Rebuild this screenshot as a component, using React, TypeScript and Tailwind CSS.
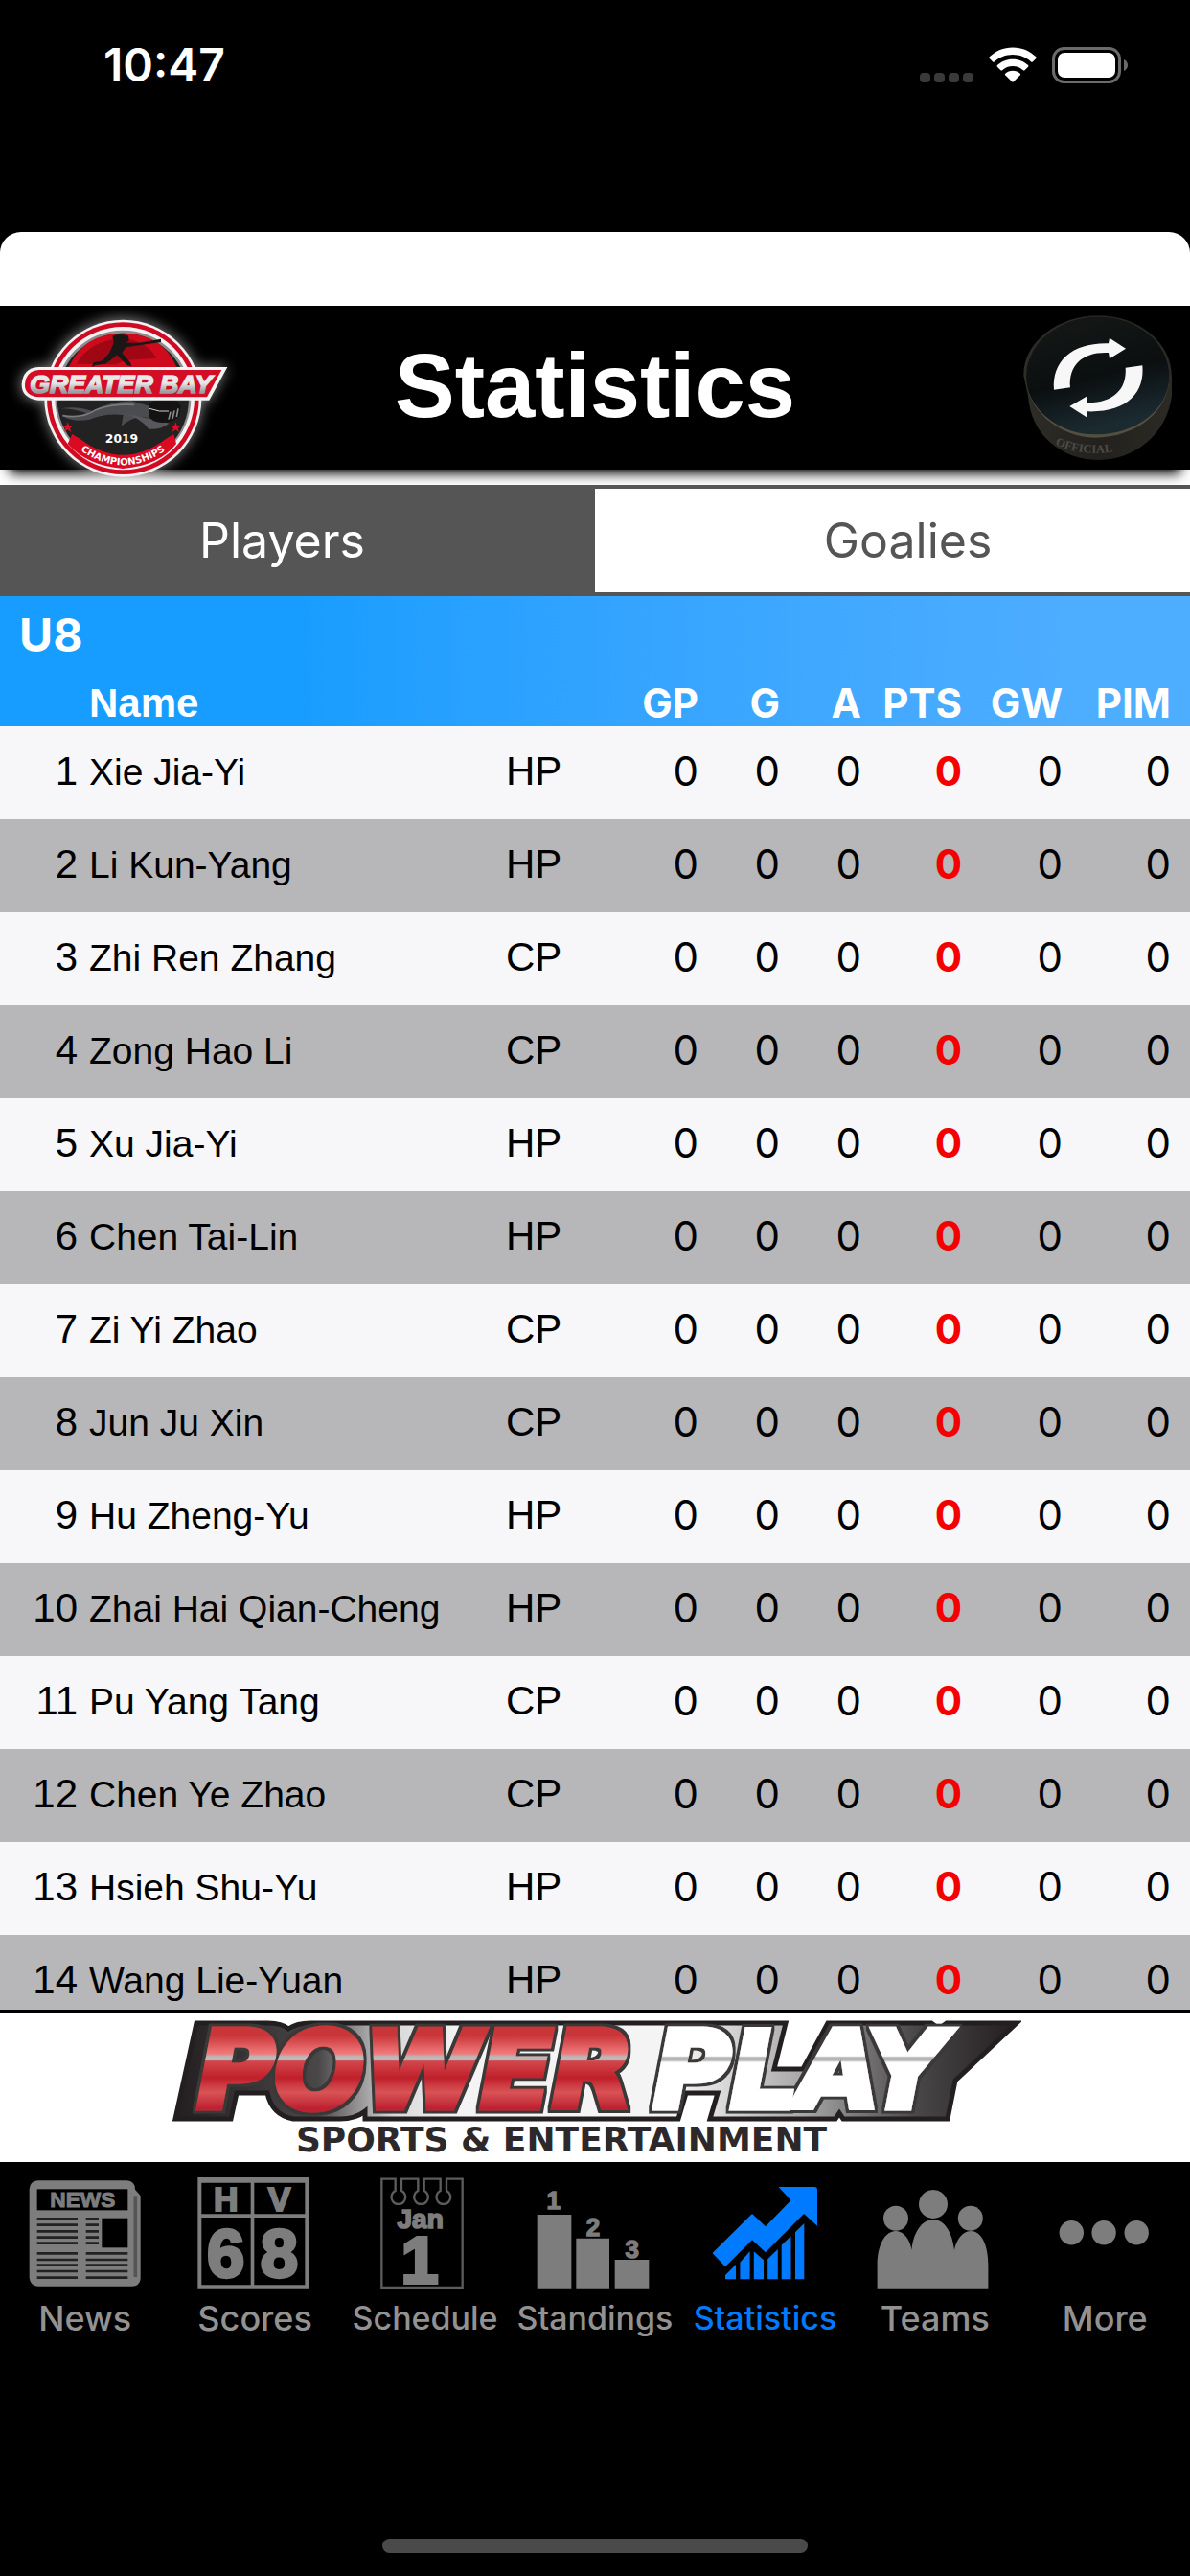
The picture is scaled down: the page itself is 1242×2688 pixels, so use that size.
import React, { useState } from 'react';
import clsx from 'clsx';

type Player = { name: string; team: string };

const players: Player[] = [
  { name: 'Xie Jia-Yi', team: 'HP' },
  { name: 'Li Kun-Yang', team: 'HP' },
  { name: 'Zhi Ren Zhang', team: 'CP' },
  { name: 'Zong Hao Li', team: 'CP' },
  { name: 'Xu Jia-Yi', team: 'HP' },
  { name: 'Chen Tai-Lin', team: 'HP' },
  { name: 'Zi Yi Zhao', team: 'CP' },
  { name: 'Jun Ju Xin', team: 'CP' },
  { name: 'Hu Zheng-Yu', team: 'HP' },
  { name: 'Zhai Hai Qian-Cheng', team: 'HP' },
  { name: 'Pu Yang Tang', team: 'CP' },
  { name: 'Chen Ye Zhao', team: 'CP' },
  { name: 'Hsieh Shu-Yu', team: 'HP' },
  { name: 'Wang Lie-Yuan', team: 'HP' },
];

const statColumns = ['GP', 'G', 'A', 'PTS', 'GW', 'PIM'];

function StatusBar() {
  return (
    <div className="flex h-[136px] shrink-0 items-center justify-between pl-[108px] pr-16 text-white">
      <span className="text-5xl font-semibold leading-none">10:47</span>
      <div className="flex items-center gap-4">
        <svg viewBox="0 0 56 38" className="h-[38px] w-14" fill="#3a3a3a">
          <rect x="0" y="27" width="11" height="10" rx="4" />
          <rect x="15" y="27" width="11" height="10" rx="4" />
          <rect x="30" y="27" width="11" height="10" rx="4" />
          <rect x="45" y="27" width="11" height="10" rx="4" />
        </svg>
        <svg viewBox="0 0 50 38" className="h-[38px] w-[50px]" fill="white">
          <path d="M25 0.5C34.5 0.5 43 4.2 49.3 10.3C49.8 10.8 49.8 11.4 49.3 11.9L45.8 15.4C45.3 15.9 44.7 15.9 44.2 15.4C39.1 10.6 32.4 7.9 25 7.9C17.6 7.9 10.9 10.6 5.8 15.4C5.3 15.9 4.7 15.9 4.2 15.4L0.7 11.9C0.2 11.4 0.2 10.8 0.7 10.3C7 4.2 15.5 0.5 25 0.5Z" />
          <path d="M25 12.8C31.2 12.8 36.9 15.2 41.1 19.1C41.6 19.6 41.6 20.2 41.1 20.7L37.5 24.2C37 24.7 36.4 24.7 35.9 24.2C33 21.6 29.2 20 25 20C20.8 20 17 21.6 14.1 24.2C13.6 24.7 13 24.7 12.5 24.2L8.9 20.7C8.4 20.2 8.4 19.6 8.9 19.1C13.1 15.2 18.8 12.8 25 12.8Z" />
          <path d="M25 24.8C28 24.8 30.7 25.9 32.8 27.7C33.3 28.2 33.3 28.8 32.8 29.3L25.8 36.3C25.3 36.8 24.7 36.8 24.2 36.3L17.2 29.3C16.7 28.8 16.7 28.2 17.2 27.7C19.3 25.9 22 24.8 25 24.8Z" />
        </svg>
        <svg viewBox="0 0 80 38" className="h-[38px] w-20">
          <rect x="1.5" y="1.5" width="69" height="35" rx="11" fill="none" stroke="#6b6b6b" strokeWidth="3" />
          <rect x="6" y="6" width="60" height="26" rx="7" fill="white" />
          <path d="M75 13C78 14.5 79 17 79 19C79 21 78 23.5 75 25Z" fill="#6b6b6b" />
        </svg>
      </div>
    </div>
  );
}

function Emblem() {
  return (
    <svg viewBox="0 30 720 540" className="h-[180px] w-60 shrink-0 overflow-visible" role="img" aria-label="Greater Bay Championships 2019">
      <defs>
        <filter id="glow" x="-30%" y="-30%" width="160%" height="160%">
          <feGaussianBlur stdDeviation="20" />
        </filter>
        <linearGradient id="lettering" x1="0" y1="0" x2="0" y2="1">
          <stop offset="0.45" stopColor="#e8e8e8" />
          <stop offset="0.75" stopColor="#9c9ea1" />
        </linearGradient>
        <path id="ribbon" d="M232 468Q385 590 538 468" />
      </defs>
      <g filter="url(#glow)" fill="#fff" opacity="0.5">
        <circle cx="385" cy="318" r="248" />
        <path d="M120 222H712L655 328H120Q62 320 66 275Q70 225 120 222Z" />
      </g>
      <circle cx="385" cy="320" r="246" fill="#f2f2f2" />
      <circle cx="385" cy="320" r="238" fill="#cf0a22" />
      <circle cx="385" cy="320" r="224" fill="#f2f2f2" />
      <circle cx="385" cy="320" r="213" fill="#8d8d8d" />
      <circle cx="385" cy="322" r="206" fill="#222" />
      <path d="M216 222Q262 116 385 116Q508 116 553 222Z" fill="#cf0a1c" />
      <path d="M240 212Q280 138 385 132Q460 140 490 194L400 200L360 214Z" fill="#a10615" />
      <path
        d="M352 124Q376 116 402 124L404 138L396 146L436 146L504 134V144L436 154L394 160L382 178L408 208L412 220L398 216L366 184L352 196L330 212L300 216L288 222L292 208L322 202L342 178L356 148Z"
        fill="#1b1717"
      />
      <path d="M190 352Q240 342 290 360Q340 330 410 328L468 344V382Q420 370 380 408L386 372Q330 366 280 386Q230 396 196 376Q250 380 270 366Q230 352 190 352Z" fill="#4a4c4f" />
      <path d="M384 366Q440 378 474 384L530 398Q500 420 466 416Q440 380 384 366Z" fill="#56585b" />
      <path d="M196 374Q260 384 300 356Q350 336 420 340" fill="none" stroke="#7a7c7f" strokeWidth="5" />
      <path d="M466 346Q470 322 520 322Q560 322 566 344L562 376Q540 398 506 396Q472 394 468 376Z" fill="#141212" />
      <path d="M468 352Q500 364 528 360" fill="none" stroke="#d0d0d0" strokeWidth="3" />
      <path d="M534 362L528 386M546 358L540 384M558 352L553 378" stroke="#8b8b8b" strokeWidth="5" />
      <path d="M212 394L216 405L229 406L219 413L223 426L212 418L201 426L205 413L195 406L208 405Z" fill="#e00d25" />
      <path d="M550 394L554 405L567 406L557 413L561 426L550 418L539 426L543 413L533 406L546 405Z" fill="#e00d25" />
      <path d="M226 432L250 446Q385 548 520 446L544 432L552 462Q500 530 385 540Q270 530 212 462Z" fill="#d90a22" />
      <path d="M120 222H712L655 326H120Q66 318 68 275Q72 226 120 222Z" fill="#f4f4f4" />
      <path d="M122 231H694L648 316H122Q76 312 78 275Q82 234 122 231Z" fill="#d40d26" />
      <g fontFamily="Liberation Sans, sans-serif" fontSize="80" fontWeight="700" fontStyle="italic" textAnchor="middle">
        <text x="379" y="304" fill="url(#lettering)" stroke="url(#lettering)" strokeWidth="5">
          GREATER BAY
        </text>
      </g>
      <text x="381" y="458" textAnchor="middle" fill="#fff" fontFamily="DejaVu Sans, sans-serif" fontSize="37" fontWeight="700">
        2019
      </text>
      <text fill="#fff" fontFamily="DejaVu Sans, sans-serif" fontSize="30" fontWeight="700">
        <textPath href="#ribbon" startOffset="50%" textAnchor="middle">
          CHAMPIONSHIPS
        </textPath>
      </text>
    </svg>
  );
}

function PuckIcon() {
  return (
    <svg viewBox="75 45 480 480" className="size-40">
      <defs>
        <linearGradient id="puckTop" x1="0" y1="0" x2="0.3" y2="1">
          <stop offset="0" stopColor="#161917" />
          <stop offset="0.6" stopColor="#0b0f10" />
          <stop offset="1" stopColor="#1b2a30" />
        </linearGradient>
        <linearGradient id="puckSide" x1="0" y1="0" x2="1" y2="0">
          <stop offset="0" stopColor="#2e2d28" />
          <stop offset="0.5" stopColor="#22211d" />
          <stop offset="1" stopColor="#2b2a25" />
        </linearGradient>
        <path id="puckEdge" d="M150 446Q260 510 395 478" />
      </defs>
      <path d="M82 245C82 140 190 58 316 58C440 58 546 140 546 250V310C530 430 430 510 316 510C200 510 104 430 96 310Z" fill="url(#puckSide)" />
      <path d="M90 250C90 142 196 61 316 61C436 61 538 142 538 250C538 360 430 440 306 440C190 440 90 350 90 250Z" fill="#54503f" />
      <path d="M90 248C90 142 196 61 316 61C436 61 538 142 538 248C538 355 430 430 306 430C190 430 90 348 90 248Z" fill="url(#puckTop)" />
      <text fill="#4d4b45" fontFamily="Liberation Serif, serif" fontSize="38" fontWeight="700">
        <textPath href="#puckEdge" startOffset="50%" textAnchor="middle">
          OFFICIAL
        </textPath>
      </text>
      <path d="M177 290C170 200 235 142 348 145L351 128L402 161L351 193L348 174C270 170 222 210 228 283Z" fill="#f7f7f7" />
      <path d="M454 214C462 300 405 362 281 358L279 376L226 342L279 311L281 330C360 332 406 290 401 221Z" fill="#f7f7f7" />
    </svg>
  );
}

function Header() {
  return (
    <header className="mb-4 flex h-[171px] shrink-0 items-start justify-between bg-black text-white shadow-[0_14px_12px_-10px_#000]">
      <Emblem />
      <h1 className="self-center pb-1 font-['Liberation_Sans',sans-serif] text-[94px] font-bold leading-none">Statistics</h1>
      <div className="flex w-60 justify-end self-center pr-4">
        <button type="button" aria-label="Refresh">
          <PuckIcon />
        </button>
      </div>
    </header>
  );
}

function Tabs() {
  const [active, setActive] = useState('Players');
  return (
    <div className="grid h-[116px] shrink-0 grid-cols-2 border-y-4 border-[#555] bg-[#555] text-[50px]" role="tablist">
      {['Players', 'Goalies'].map((tab) => (
        <button
          key={tab}
          type="button"
          role="tab"
          aria-selected={active === tab}
          onClick={() => setActive(tab)}
          className={clsx(
            active === tab ? 'bg-[#555] text-white' : 'bg-white text-[#555]',
            tab === 'Players' ? 'pr-8' : 'pl-8',
          )}
        >
          {tab}
        </button>
      ))}
    </div>
  );
}

function StatsTable() {
  return (
    <div className="min-h-0 flex-1 overflow-hidden">
      <table className="w-full table-fixed border-collapse text-[42px] leading-none text-black">
        <colgroup>
          <col className="w-[81px]" />
          <col />
          <col className="w-[99px]" />
          <col className="w-[102px]" />
          <col className="w-[85px]" />
          <col className="w-[85px]" />
          <col className="w-[105px]" />
          <col className="w-[105px]" />
          <col className="w-[133px]" />
        </colgroup>
        <thead className="bg-linear-to-r from-[#179dff] from-25% to-[#4dadff] to-90% text-white">
          <tr className="h-20">
            <th colSpan={9} scope="colgroup" className="pl-5 pt-0.5 text-left text-5xl font-bold">
              U8
            </th>
          </tr>
          <tr className="h-14">
            <td />
            <th scope="col" className="pl-3 pt-2 text-left font-['Liberation_Sans',sans-serif] font-bold">Name</th>
            <td />
            {statColumns.map((label) => (
              <th key={label} scope="col" className="pt-2 text-right font-bold last:pr-5">
                {label}
              </th>
            ))}
          </tr>
        </thead>
        <tbody>
          {players.map((player, i) => (
            <tr key={player.name} className="h-[97px] odd:bg-[#f7f7f9] even:bg-[#b7b7b9]">
              <td className="pb-1 text-right font-['Liberation_Sans',sans-serif]">{i + 1}</td>
              <td className="whitespace-nowrap pb-0.5 pl-3 font-['Liberation_Sans',sans-serif] text-[39px]">{player.name}</td>
              <td className="pb-1 font-['Liberation_Sans',sans-serif]">{player.team}</td>
              {statColumns.map((label) => (
                <td
                  key={label}
                  className={clsx('pb-1 text-right last:pr-5', label === 'PTS' && 'font-bold text-[#f50000]')}
                >
                  0
                </td>
              ))}
            </tr>
          ))}
        </tbody>
      </table>
    </div>
  );
}

function SponsorBanner() {
  const lettering = {
    fontFamily: 'DejaVu Sans, sans-serif',
    fontSize: 110,
    fontWeight: 700,
    fontStyle: 'italic',
    paintOrder: 'stroke',
  };
  return (
    <a href="#sponsor" className="flex h-[159px] shrink-0 justify-center border-t-4 border-black bg-white">
      <svg viewBox="176 2101 890 155" className="h-[155px] w-[890px]" role="img" aria-label="PowerPlay Sports & Entertainment">
        <defs>
          <linearGradient id="plate" x1="0" y1="0" x2="1" y2="0">
            <stop offset="0" stopColor="#231f20" />
            <stop offset="0.17" stopColor="#4a4748" />
            <stop offset="0.26" stopColor="#d8d8d8" />
            <stop offset="0.34" stopColor="#f4f4f4" />
            <stop offset="0.6" stopColor="#f4f4f4" />
            <stop offset="0.75" stopColor="#a5a5a5" />
            <stop offset="0.88" stopColor="#4a4748" />
            <stop offset="1" stopColor="#231f20" />
          </linearGradient>
          <linearGradient id="power" x1="0" y1="2124" x2="0" y2="2200" gradientUnits="userSpaceOnUse">
            <stop offset="0" stopColor="#c93639" />
            <stop offset="0.25" stopColor="#f17a7c" />
            <stop offset="0.29" stopColor="#b9b9b9" />
            <stop offset="0.34" stopColor="#b9b9b9" />
            <stop offset="0.35" stopColor="#d2484b" />
            <stop offset="0.58" stopColor="#c01f2b" />
            <stop offset="0.78" stopColor="#d95356" />
            <stop offset="1" stopColor="#bd2130" />
          </linearGradient>
          <linearGradient id="play" x1="0" y1="2124" x2="0" y2="2200" gradientUnits="userSpaceOnUse">
            <stop offset="0.28" stopColor="#fff" />
            <stop offset="0.3" stopColor="#b5b5b5" />
            <stop offset="0.34" stopColor="#b5b5b5" />
            <stop offset="0.37" stopColor="#fff" />
          </linearGradient>
          <filter id="outline" x="-5%" y="-15%" width="110%" height="130%">
            <feMorphology in="SourceAlpha" operator="dilate" radius="3" result="grown" />
            <feFlood floodColor="#3b3839" />
            <feComposite in2="grown" operator="in" />
            <feMerge>
              <feMergeNode />
              <feMergeNode in="SourceGraphic" />
            </feMerge>
          </filter>
        </defs>
        <path
          d="M205 2111H280Q294 2111 301 2117Q310 2111 324 2111H820L808 2159H838L864 2111H972L980 2117L988 2111H1061L997 2171L989 2211H880L876 2205L872 2211H741L749 2184H716L708 2211H381V2203Q371 2211 355 2211H306Q284 2207 279 2184H247L241 2211H183Z"
          fill="url(#plate)"
          stroke="#231f20"
          strokeWidth="5"
        />
        <g {...lettering} strokeWidth="7" filter="url(#outline)">
          <text x="206" y="2199" fill="url(#power)" stroke="url(#power)">POWER</text>
          <text x="682" y="2199" fill="url(#play)" stroke="url(#play)">PLAY</text>
        </g>
        <text x="586" y="2245" textAnchor="middle" fill="#2d292a" fontFamily="DejaVu Sans, sans-serif" fontSize="36" fontWeight="700">
          SPORTS &amp; ENTERTAINMENT
        </text>
      </svg>
    </a>
  );
}

const iconClass = 'size-[117px] overflow-visible';

function NewsIcon() {
  return (
    <svg viewBox="91 66 351 351" className={iconClass} fill="currentColor">
      <path d="M120 76H398Q424 78 424 104L441 124V384Q438 407 414 407H120Q95 405 93 380V102Q95 78 120 76Z" />
      <path d="M425 124V378" stroke="#555" strokeWidth="11" />
      <rect x="117" y="103" width="284" height="66" fill="#000" />
      <rect x="320" y="194" width="81" height="92" fill="#000" />
      <path
        d="M117 196H244M117 215H244M117 235H244M117 254H244M117 272H244M270 196H310M270 215H310M270 235H310M270 254H310M270 272H310M117 304H244M117 324H244M117 341H244M117 360H244M117 380H244M270 304H401M270 324H401M270 341H401M270 360H401M270 380H401"
        stroke="#222"
        strokeWidth="8"
      />
      <text x="260" y="158" textAnchor="middle" fontFamily="Liberation Sans, sans-serif" fontSize="68" fontWeight="700" stroke="currentColor" strokeWidth="3">
        NEWS
      </text>
    </svg>
  );
}

function ScoresIcon() {
  return (
    <svg viewBox="623 66 351 351" className={iconClass} fill="currentColor" fontFamily="Liberation Sans, sans-serif" fontWeight="700" textAnchor="middle">
      <path d="M618 66H966V413H618ZM630 83V181H784V83ZM795 83V181H954V83ZM630 192V403H784V192ZM795 192V403H954V192Z" fillRule="evenodd" />
      <g stroke="currentColor" strokeWidth="6">
        <text x="706" y="172" fontSize="106">H</text>
        <text x="874" y="172" fontSize="106">V</text>
      </g>
      <g fontFamily="Liberation Sans Narrow, Liberation Sans, sans-serif" fontSize="212" stroke="currentColor" strokeWidth="10">
        <text x="706" y="377">6</text>
        <text x="873" y="377">8</text>
      </g>
    </svg>
  );
}

function ScheduleIcon() {
  return (
    <svg viewBox="105 66 351 351" className={iconClass} fill="currentColor" fontFamily="Liberation Sans, sans-serif" fontWeight="700" textAnchor="middle">
      <path
        d="M145 71H188V108A22 22 0 1 0 207 108V71H259V108A22 22 0 1 0 278 108V71H329V108A22 22 0 1 0 348 108V71H398V411H145Z"
        fill="none"
        stroke="#5c5c5c"
        strokeWidth="7"
      />
      <g stroke="currentColor" strokeWidth="5">
        <text x="266" y="226" fontSize="84">Jan</text>
        <text x="264" y="395" fontSize="208" strokeWidth="12">1</text>
      </g>
    </svg>
  );
}

function StandingsIcon() {
  return (
    <svg viewBox="638 66 351 351" className={iconClass} fill="currentColor" fontFamily="Liberation Sans, sans-serif" fontSize="78" fontWeight="700" textAnchor="middle">
      <path d="M634 183H741V413H634ZM756 257H860V413H756ZM877 324H984V413H877Z" />
      <g stroke="currentColor" strokeWidth="4">
        <text x="685" y="164">1</text>
        <text x="809" y="249">2</text>
        <text x="931" y="317">3</text>
      </g>
    </svg>
  );
}

function StatisticsIcon() {
  return (
    <svg viewBox="0 0 117 117" className={iconClass} fill="currentColor">
      <path d="M3.5 79L45 38L59 51.3L85.5 24L72.5 10H110Q113 10 113 13V50.7L99 38L59 78.3L45 65.3L17 93.3Z" />
      <path d="M17 106.3V102L28 91V106.3ZM32.4 106.3V88.7L42.6 77.3V106.3ZM46.8 106.3V77.3L57 86.3V106.3ZM61.2 106.3V85.3L71.8 75V106.3ZM75.7 106.3V70.7L85.5 61.3V106.3ZM90 106.3V57.3L99.3 48V106.3Z" />
    </svg>
  );
}

function TeamsIcon() {
  return (
    <svg viewBox="0 0 117 117" className={iconClass} fill="currentColor">
      <circle cx="57" cy="28" r="15" />
      <circle cx="18" cy="42.7" r="13" />
      <circle cx="95.8" cy="42.7" r="13" />
      <path d="M-1.4 115.7V92C-1.4 70 7 56 18 56C27 56 33 66 34.5 75.7C36 58 45 44 57 44C69 44 77 58 79 75.7C81 66 87 56 96 56C107 56 114.4 70 114.4 92V115.7Z" />
    </svg>
  );
}

function MoreIcon() {
  return (
    <svg viewBox="0 0 117 117" className={iconClass} fill="currentColor">
      <circle cx="23.3" cy="57.7" r="12.7" />
      <circle cx="57.1" cy="57.7" r="12.7" />
      <circle cx="91.2" cy="57.7" r="12.7" />
    </svg>
  );
}

const navItems = [
  { label: 'News', Icon: NewsIcon },
  { label: 'Scores', Icon: ScoresIcon },
  { label: 'Schedule', Icon: ScheduleIcon },
  { label: 'Standings', Icon: StandingsIcon },
  { label: 'Statistics', Icon: StatisticsIcon, active: true },
  { label: 'Teams', Icon: TeamsIcon },
  { label: 'More', Icon: MoreIcon },
];

function BottomNav() {
  return (
    <nav className="flex h-[432px] shrink-0 flex-col items-center justify-between bg-black pb-6 pt-4">
      <div className="grid w-full grid-cols-7">
        {navItems.map(({ label, Icon, active }) => (
          <a
            key={label}
            href={`#${label.toLowerCase()}`}
            aria-current={active ? 'page' : undefined}
            className={clsx('flex flex-col items-center gap-1.5', active ? 'text-[#007aff]' : 'text-[#7d7d7d]')}
          >
            <Icon />
            <span
              className={clsx(
                'font-medium leading-[48px]',
                label.length > 7 ? 'text-[34px]' : 'text-[36px]',
                !active && 'text-[#929292]',
              )}
            >
              {label}
            </span>
          </a>
        ))}
      </div>
      <div className="h-[15px] w-[444px] rounded-full bg-[#4a4a4a]" />
    </nav>
  );
}

export default function App() {
  return (
    <div className="flex h-screen flex-col overflow-hidden bg-black font-[Inter,sans-serif]">
      <StatusBar />
      <main className="mt-[106px] flex min-h-0 flex-1 flex-col rounded-t-[22px] bg-white pt-[77px]">
        <Header />
        <Tabs />
        <StatsTable />
        <SponsorBanner />
      </main>
      <BottomNav />
    </div>
  );
}
